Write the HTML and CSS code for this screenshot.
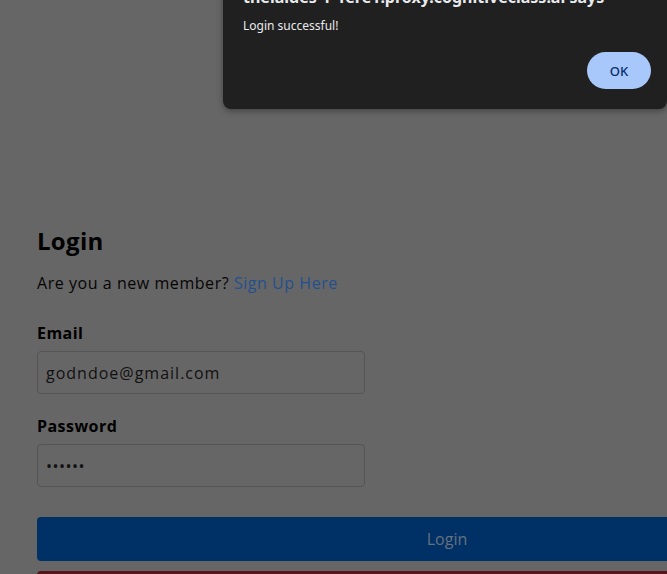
FILE: index.html
```html
<!DOCTYPE html>
<html lang="en">
<head>
<meta charset="utf-8">
<title>Login</title>
<link rel="stylesheet" href="styles.css">
</head>
<body>
<main class="page">
  <h1 class="title">Login</h1>
  <p class="lead">Are you a new member? <a class="link" href="#">Sign Up Here</a></p>
  <form class="form">
    <label class="label" for="email">Email</label>
    <input class="field" id="email" type="text" value="godndoe@gmail.com">
    <label class="label label-pw" for="pw">Password</label>
    <input class="field field-pw" id="pw" type="password" value="secret">
    <button class="submit" type="button">Login</button>
    <div class="danger-bar"></div>
  </form>
</main>
<div class="dialog" role="alertdialog">
  <div class="dialog-title">theiaides-1-1ere1.proxy.cognitiveclass.ai says</div>
  <div class="dialog-msg">Login successful!</div>
  <div class="dialog-actions"><button class="ok" type="button">OK</button></div>
</div>
</body>
</html>
```
FILE: styles.css
```css
html, body {
  margin: 0;
  padding: 0;
  height: 100%;
  overflow: hidden;
  background: #666666;
}
body {
  font-family: "Open Sans", "Liberation Sans", sans-serif;
  color: #000;
}
.page {
  padding: 226px 0 0 37px;
}
.title {
  margin: 0;
  font-size: 24px;
  line-height: 30px;
  font-weight: 700;
  letter-spacing: 0.3px;
  color: #000;
}
.lead {
  margin: 15px 0 0;
  font-size: 16px;
  line-height: 24px;
  letter-spacing: 0.55px;
  color: #050505;
}
.link {
  color: #23508f;
  text-decoration: none;
}
.form {
  display: flex;
  flex-direction: column;
  align-items: flex-start;
  margin-top: 26px;
}
.label {
  font-size: 16px;
  line-height: 24px;
  font-weight: 700;
  letter-spacing: 0.45px;
  color: #000;
}
.label-pw {
  margin-top: 20px;
}
.field {
  box-sizing: border-box;
  margin-top: 6px;
  width: 328px;
  height: 43px;
  padding: 0 8px;
  border: 1px solid #555;
  border-radius: 4px;
  background: #666;
  font-family: inherit;
  font-size: 16px;
  letter-spacing: 1px;
  color: #111;
  outline: none;
}
.field-pw {
  letter-spacing: 0.5px;
}
.submit {
  box-sizing: border-box;
  margin-top: 30px;
  width: 820px;
  height: 44px;
  border: 0;
  border-radius: 4px;
  background: #003166;
  color: #66707e;
  font-family: "Open Sans", sans-serif;
  font-size: 16px;
}
.danger-bar {
  margin-top: 10px;
  width: 820px;
  height: 20px;
  border-radius: 4px;
  background: #58151b;
}
.dialog {
  position: absolute;
  top: -33px;
  left: 223px;
  width: 444px;
  box-sizing: border-box;
  padding: 20px 16px 20px 20px;
  background: #202020;
  border-radius: 8px;
  box-shadow: 0 2px 6px rgba(0, 0, 0, 0.35);
  font-family: "Noto Sans", "Open Sans", sans-serif;
  color: #e8eaed;
}
.dialog-title {
  font-size: 16px;
  line-height: 20px;
  font-weight: 700;
  white-space: nowrap;
  overflow: hidden;
}
.dialog-msg {
  margin-top: 10px;
  font-size: 12px;
  line-height: 18px;
}
.dialog-actions {
  display: flex;
  justify-content: flex-end;
  margin-top: 17px;
}
.ok {
  width: 64px;
  height: 37px;
  border: 0;
  border-radius: 19px;
  background: #a8c7fa;
  color: #062e6f;
  font-family: "Noto Sans", sans-serif;
  font-size: 13px;
  font-weight: 500;
}
```
